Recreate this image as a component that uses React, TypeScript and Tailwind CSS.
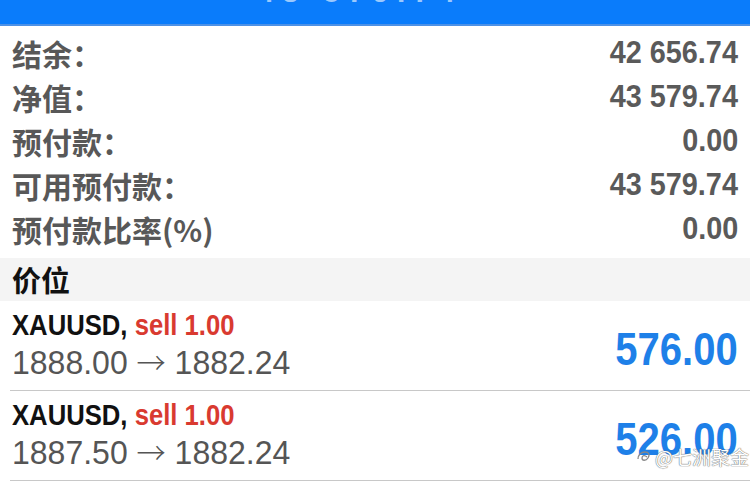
import React from "react";

const rows: [string, string][] = [
  ["结余：", "42 656.74"],
  ["净值：", "43 579.74"],
  ["预付款：", "0.00"],
  ["可用预付款：", "43 579.74"],
  ["预付款比率(%)", "0.00"],
];

const positions = [
  { sym: "XAUUSD,", side: "sell 1.00", from: "1888.00", to: "1882.24", profit: "576.00" },
  { sym: "XAUUSD,", side: "sell 1.00", from: "1887.50", to: "1882.24", profit: "526.00" },
];

export default function App() {
  return (
    <div className="relative w-[750px] h-[488px] overflow-hidden bg-white font-['Liberation_Sans',sans-serif]">
      {/* top bar */}
      <div className="h-[26px] bg-[#0a7cfb] border-b-2 border-[#4d91e6] overflow-hidden flex justify-center">
        <span className="mt-[-23px] text-[30px] leading-[30px] font-bold text-white/60 tracking-[8px] pr-[30px]">
          43 579.74
        </span>
      </div>

      {/* summary rows */}
      <div className="pt-[5px] pb-[7px] pl-[12px] pr-[12px]">
        {rows.map(([label, value]) => (
          <div key={label} className="h-[44px] flex items-center justify-between">
            <span className="font-['Noto_Sans_CJK_SC','Liberation_Sans',sans-serif] font-bold text-[30px] leading-[44px] text-[#585858]">
              {label}
            </span>
            <span className="inline-block origin-right scale-x-[0.93] font-bold text-[31px] leading-[44px] text-[#5a5a5a]">
              {value}
            </span>
          </div>
        ))}
      </div>

      {/* section header */}
      <div className="h-[43px] bg-[#f4f4f4] pl-[12px] flex items-center">
        <span className="font-['Noto_Sans_CJK_SC',sans-serif] font-bold text-[29px] leading-[43px] text-[#111]">
          价位
        </span>
      </div>

      {/* positions */}
      {positions.map((p, i) => (
        <div key={i} className="ml-[10px] h-[90px] border-b border-[#c8c8c8] flex justify-between pl-[2px] pr-[12px]">
          <div className="flex flex-col pt-[8px]">
            <span className="inline-block origin-left scale-x-[0.885] whitespace-nowrap font-bold text-[29px] leading-[33px]">
              <span className="text-[#111]">{p.sym}</span>{" "}
              <span className="text-[#d93a30]">{p.side}</span>
            </span>
            <span className="mt-[3px] inline-block origin-left scale-x-[0.97] whitespace-nowrap text-[33px] leading-[33px] text-[#555]">
              {p.from}{" "}
              <span className="font-['Noto_Sans_CJK_SC',sans-serif] font-light text-[30px]">→</span>{" "}
              {p.to}
            </span>
          </div>
          <span className="self-start mt-[23px] inline-block origin-right scale-x-[0.87] font-bold text-[46px] leading-[50px] text-[#1e80e8]">
            {p.profit}
          </span>
        </div>
      ))}

      {/* watermark */}
      <div className="absolute left-[634px] top-[445px] flex items-center gap-[1px] whitespace-nowrap text-[19px] leading-[24px] text-white font-['Noto_Sans_CJK_SC',sans-serif] [text-shadow:0_0_1px_#666,0_0_1px_#666]">
        <svg width="20" height="20" viewBox="0 0 20 20" fill="none" stroke="#888" strokeWidth="1.3">
          <path d="M4 12c0-4 3-7 7-7s5 3 3 6-6 3-6 0 3-3 5-1" />
        </svg>
        <span>@七洲聚金</span>
      </div>
    </div>
  );
}
